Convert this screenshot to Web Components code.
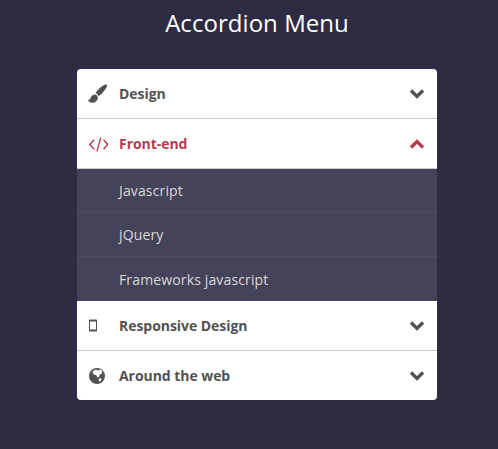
<!DOCTYPE html>
<html>
<head>
<meta charset="utf-8">
<title>Accordion Menu</title>
<style>
  html, body { margin: 0; background: #2e2c42; }
  body { font-family: "Open Sans", sans-serif; height: 449px; overflow: hidden; }
</style>
</head>
<body>
<accordion-page heading="Accordion Menu">
  <accordion-section label="Design" icon="brush"></accordion-section>
  <accordion-section label="Front-end" icon="code" open>
    <accordion-link>Javascript</accordion-link>
    <accordion-link>jQuery</accordion-link>
    <accordion-link last>Frameworks javascript</accordion-link>
  </accordion-section>
  <accordion-section label="Responsive Design" icon="mobile"></accordion-section>
  <accordion-section label="Around the web" icon="globe" last></accordion-section>
</accordion-page>

<script>
const icons = {
  brush: `<svg viewBox="0 0 20 20" width="20" height="20"><path fill="currentColor" d="M18.600.8c.7.600.5 1.700-.1 2.700-1.400 2.200-3.700 5.300-5.600 7-.8.700-1.700 1.400-2.500 1.400-.4-1.300-1.300-2.300-2.700-2.700C8.300 8 9 7.100 9.700 6.300c1.700-1.900 4.300-4.300 6.300-5.300 1-.5 1.900-.8 2.600-.2zM7 10.500c1.500.2 2.700 1.500 2.800 3 .1 2.600-2.100 5.300-5.300 5.300-2 0-3.800-1.100-4.500-2.900 1 .1 1.700-.3 2.100-1.100C2.800 13 4.200 10.300 7 10.500z"/></svg>`,
  code: `<svg viewBox="0 0 20 20" width="20" height="20"><path fill="none" stroke="currentColor" stroke-width="1.400" d="M6.200 5.800 1.800 10.500 6.200 15.200M15.500 5.800 19.900 10.500 15.500 15.200M12.700 3.600 9 17.400"/></svg>`,
  mobile: `<svg viewBox="0 0 20 20" width="20" height="20"><path fill="currentColor" fill-rule="evenodd" d="M2 3.500h6c.6 0 1 .4 1 1v10c0 .6-.4 1-1 1H2c-.6 0-1-.4-1-1v-10c0-.6.4-1 1-1zm0 2v8h6v-8z"/></svg>`,
  globe: `<svg viewBox="0 0 20 20" width="20" height="20"><path fill="currentColor" fill-rule="evenodd" d="M9 2a8 8 0 1 1 0 16A8 8 0 0 1 9 2zM5.500 4.500 4.500 6.800 6 8.600l2.300.7 1.100 2.200 1.500-.5.700-2.300 2-.9.700-2.700-2.300-1.500-1.900 1-1.200-.3-.6-.9zM11.800 12l-1.100 1.500.4 2.300 1.700-1 .7-2.200z"/></svg>`
};

const chevrons = {
  down: '<path fill="none" stroke="currentColor" stroke-width="3.300" d="M2 2.500 8 8.500 14 2.500"/>',
  up: '<path fill="none" stroke="currentColor" stroke-width="3.300" d="M2 9.500 8 3.500 14 9.500"/>'
};

const pageTemplate = document.createElement('template');
pageTemplate.innerHTML = `
  <style>
    :host {
      display: block;
      width: 360px;
      margin-left: 77px;
      color: #fff;
    }
    h1 {
      margin: 0;
      padding-top: 6px;
      height: 69px;
      box-sizing: border-box;
      font-size: 24px;
      line-height: 33px;
      font-weight: 400;
      letter-spacing: 0.05px;
      text-align: center;
      white-space: nowrap;
    }
    .menu {
      background: #fff;
      border-radius: 4px;
      overflow: hidden;
    }
  </style>
  <h1></h1>
  <div class="menu"><slot></slot></div>
`;

class AccordionPage extends HTMLElement {
  constructor() {
    super();
    this.attachShadow({ mode: 'open' }).appendChild(pageTemplate.content.cloneNode(true));
  }

  connectedCallback() {
    this.shadowRoot.querySelector('h1').textContent = this.getAttribute('heading');
  }
}

const sectionTemplate = document.createElement('template');
sectionTemplate.innerHTML = `
  <style>
    :host {
      display: block;
      color: #525252;
    }
    :host([open]) { color: #b63b4d; }
    .head {
      display: flex;
      align-items: center;
      height: 49px;
      padding: 0 12px 0 11px;
      border-bottom: 1px solid #cccccc;
      font-size: 14px;
      font-weight: 700;
    }
    :host([last]) .head { border-bottom: 0; }
    .icon {
      display: flex;
      width: 20px;
      height: 20px;
      margin-right: 11px;
    }
    .label { flex: 1; letter-spacing: -0.05px; }
    .chevron { display: block; }
    .sub { display: none; }
    :host([open]) .sub { display: block; }
  </style>
  <div class="head">
    <span class="icon"></span>
    <span class="label"></span>
    <svg class="chevron" viewBox="0 0 16 12" width="16" height="12"></svg>
  </div>
  <div class="sub"><slot></slot></div>
`;

class AccordionSection extends HTMLElement {
  constructor() {
    super();
    this.attachShadow({ mode: 'open' }).appendChild(sectionTemplate.content.cloneNode(true));
  }

  connectedCallback() {
    const root = this.shadowRoot;
    root.querySelector('.label').textContent = this.getAttribute('label');
    root.querySelector('.icon').innerHTML = icons[this.getAttribute('icon')] || '';
    root.querySelector('.chevron').innerHTML = this.hasAttribute('open') ? chevrons.up : chevrons.down;
    root.querySelector('.head').addEventListener('click', () => this.toggleAttribute('open'));
  }
}

const linkTemplate = document.createElement('template');
linkTemplate.innerHTML = `
  <style>
    :host {
      display: flex;
      align-items: center;
      box-sizing: border-box;
      height: 44px;
      padding-left: 42px;
      background: #444359;
      border-bottom: 1px solid #4e4d63;
      color: #d9d9d9;
      font-size: 14px;
      font-weight: 400;
      letter-spacing: 0.14px;
    }
    :host([last]) { border-bottom: 0; }
  </style>
  <slot></slot>
`;

class AccordionLink extends HTMLElement {
  constructor() {
    super();
    this.attachShadow({ mode: 'open' }).appendChild(linkTemplate.content.cloneNode(true));
  }
}

customElements.define('accordion-page', AccordionPage);
customElements.define('accordion-section', AccordionSection);
customElements.define('accordion-link', AccordionLink);
</script>
</body>
</html>
